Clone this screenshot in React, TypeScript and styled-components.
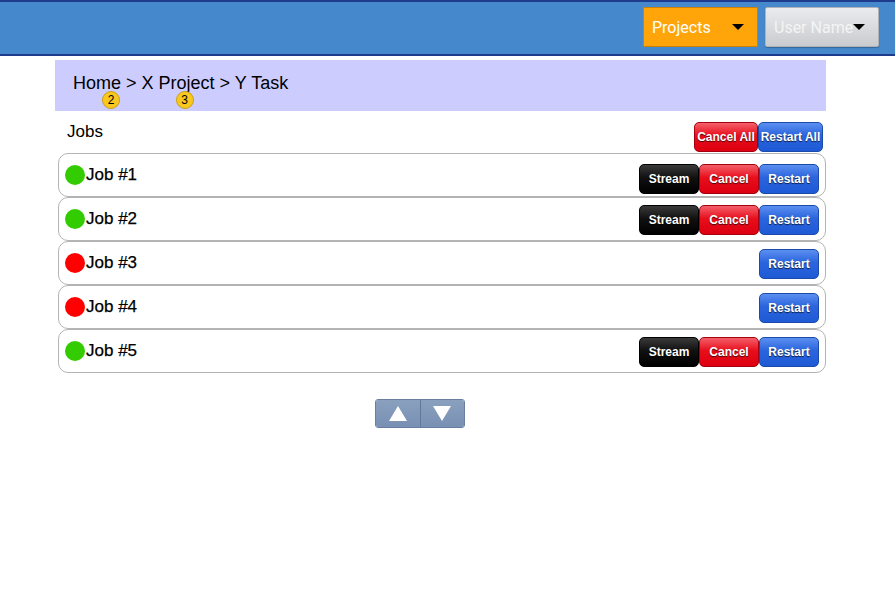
import React from "react";
import styled, { createGlobalStyle, css } from "styled-components";

const Global = createGlobalStyle`
  html, body { margin: 0; padding: 0; background: #fff; }
  body { font-family: "Liberation Sans", Arial, sans-serif; }
`;

const Header = styled.header`
  height: 47px;
  background: #4589cc;
  border-top: 2px solid #1e3b8e;
  border-bottom: 2px solid #1e3b8e;
  display: flex;
  justify-content: flex-end;
  align-items: flex-start;
  gap: 7px;
  padding: 5px 16px 0 0;
  box-sizing: content-box;
`;

const DropButton = styled.div<{ $variant: "orange" | "gray" }>`
  box-sizing: border-box;
  height: 40px;
  display: flex;
  align-items: center;
  white-space: nowrap;
  font-family: Roboto, "Liberation Sans", sans-serif;
  font-size: 16px;
  color: #fff;
  ${(p) =>
    p.$variant === "orange"
      ? css`
          width: 115px;
          justify-content: space-between;
          background: #ffa50a;
          border: 1px solid #c88206;
          padding: 0 13px 0 8px;
        `
      : css`
          width: 114px;
          justify-content: flex-start;
          background: linear-gradient(#e9ebee, #c9cbce);
          border: 1px solid #b0b2b6;
          color: #f4f4f4;
          padding: 0 0 0 8px;
          border-radius: 2px;
          box-shadow: 0 1px 1px rgba(0, 0, 0, 0.25);
        `}
`;

const Caret = styled.span`
  width: 0;
  height: 0;
  border-left: 6px solid transparent;
  border-right: 6px solid transparent;
  border-top: 6px solid #000;
`;

const Main = styled.main`
  margin: 4px 0 0 55px;
  width: 771px;
`;

const Crumbs = styled.nav`
  height: 51px;
  background: #ccccff;
  padding: 13px 0 0 18px;
  box-sizing: border-box;
  font-size: 18px;
  color: #000;
`;

const Crumb = styled.span`
  position: relative;
`;

const Badge = styled.span<{ $left: number }>`
  position: absolute;
  left: ${(p) => p.$left}px;
  top: 18px;
  width: 18px;
  height: 18px;
  box-sizing: border-box;
  border-radius: 50%;
  background: #f8c81e;
  border: 1px solid #c9a017;
  font-size: 12px;
  line-height: 16px;
  text-align: center;
  color: #000;
`;

const JobsHead = styled.div`
  height: 42px;
  box-sizing: border-box;
  display: flex;
  align-items: flex-end;
  justify-content: space-between;
  padding: 0 3px 1px 12px;
  font-size: 17px;
`;

const JobsLabel = styled.span`
  align-self: center;
  margin-top: 0;
`;

const Group = styled.div<{ $drop?: number }>`
  display: flex;
  align-items: center;
  ${(p) =>
    p.$drop !== undefined &&
    css`
      align-self: flex-start;
      margin-top: ${p.$drop}px;
    `}
`;

const btnColors = {
  stream: css`
    background: linear-gradient(#3a3a3a 0%, #111 45%, #000 100%);
    border-color: #000;
  `,
  cancel: css`
    background: linear-gradient(#f3606a 0%, #e80e1c 45%, #dd0010 100%);
    border-color: #a40010;
  `,
  restart: css`
    background: linear-gradient(#5b8ff0 0%, #2a64dd 45%, #1f5ad6 100%);
    border-color: #1c4aa8;
  `,
};

const Btn = styled.button<{ $kind: "stream" | "cancel" | "restart"; $w?: number }>`
  box-sizing: border-box;
  width: ${(p) => p.$w ?? 60}px;
  height: 30px;
  border: 1px solid;
  border-radius: 5px;
  padding: 0;
  font-family: "Liberation Sans", Arial, sans-serif;
  font-weight: bold;
  font-size: 12px;
  color: #fff;
  text-shadow: 0 1px 1px rgba(0, 0, 0, 0.7);
  ${(p) => btnColors[p.$kind]}
`;

const List = styled.div`
  margin-left: 3px;
  width: 768px;
`;

const Row = styled.div`
  box-sizing: border-box;
  height: 44px;
  border: 1px solid #b4b4b4;
  border-radius: 10px;
  display: flex;
  align-items: center;
  justify-content: space-between;
  padding: 0 6px 0 6px;
`;

const Dot = styled.span<{ $ok: boolean }>`
  width: 20px;
  height: 20px;
  border-radius: 50%;
  background: ${(p) => (p.$ok ? "#33cc00" : "#ff0000")};
  margin-right: 1px;
`;

const JobName = styled.span`
  font-size: 17px;
  color: #000;
  -webkit-text-stroke: 0.25px #000;
`;

const Pager = styled.div`
  margin: 26px 0 0 320px;
  width: 90px;
  height: 29px;
  display: flex;
  border: 1px solid #6a7f9f;
  border-radius: 3px;
  box-sizing: border-box;
  overflow: hidden;
`;

const PageBtn = styled.div`
  flex: 1;
  display: flex;
  align-items: center;
  justify-content: center;
  background: linear-gradient(#8aa0bf, #7890b2);
  & + & {
    border-left: 1px solid #627898;
  }
`;

const Tri = styled.span<{ $up: boolean }>`
  width: 0;
  height: 0;
  border-left: 9px solid transparent;
  border-right: 9px solid transparent;
  ${(p) =>
    p.$up
      ? css`border-bottom: 15px solid #fff;`
      : css`border-top: 15px solid #fff;`}
`;

const jobs = [
  { name: "Job #1", ok: true, drop: 10 },
  { name: "Job #2", ok: true, drop: 7 },
  { name: "Job #3", ok: false, drop: 7 },
  { name: "Job #4", ok: false, drop: 7 },
  { name: "Job #5", ok: true, drop: 7 },
];

export default function App() {
  return (
    <>
      <Global />
      <Header>
        <DropButton $variant="orange">
          Projects <Caret />
        </DropButton>
        <DropButton $variant="gray">
          User Name<Caret />
        </DropButton>
      </Header>
      <Main>
        <Crumbs>
          <Crumb>
            Home<Badge $left={29}>2</Badge>
          </Crumb>{" "}
          &gt;{" "}
          <Crumb>
            X Project<Badge $left={34}>3</Badge>
          </Crumb>{" "}
          &gt; Y Task
        </Crumbs>
        <JobsHead>
          <JobsLabel>Jobs</JobsLabel>
          <Group>
            <Btn $kind="cancel" $w={64}>Cancel All</Btn>
            <Btn $kind="restart" $w={65}>Restart All</Btn>
          </Group>
        </JobsHead>
        <List>
          {jobs.map((j) => (
            <Row key={j.name}>
              <Group>
                <Dot $ok={j.ok} />
                <JobName>{j.name}</JobName>
              </Group>
              <Group $drop={j.drop}>
                {j.ok && <Btn $kind="stream">Stream</Btn>}
                {j.ok && <Btn $kind="cancel">Cancel</Btn>}
                <Btn $kind="restart">Restart</Btn>
              </Group>
            </Row>
          ))}
        </List>
        <Pager>
          <PageBtn>
            <Tri $up />
          </PageBtn>
          <PageBtn>
            <Tri $up={false} />
          </PageBtn>
        </Pager>
      </Main>
    </>
  );
}
